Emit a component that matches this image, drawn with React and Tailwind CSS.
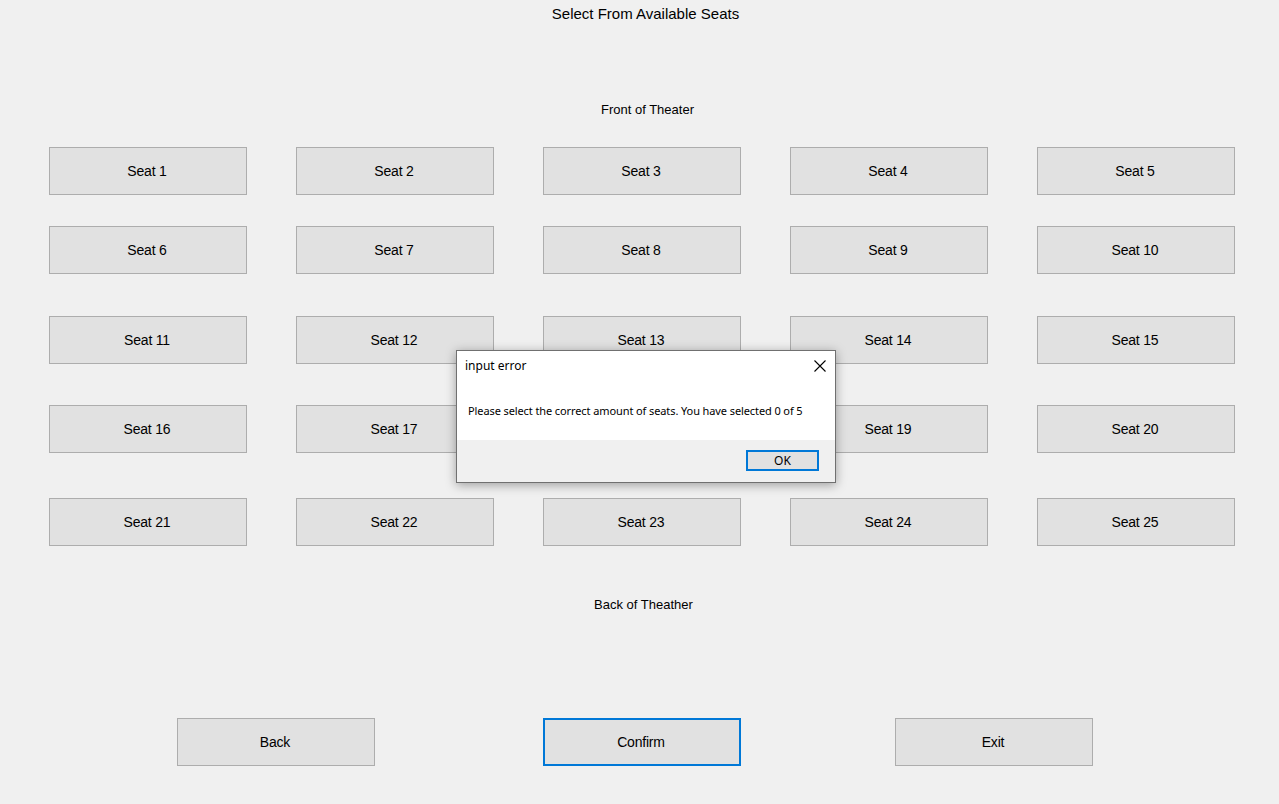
import React from "react";

const rows = [
  { mt: "mt-[0px]", seats: [1, 2, 3, 4, 5] },
  { mt: "mt-[31px]", seats: [6, 7, 8, 9, 10] },
  { mt: "mt-[42px]", seats: [11, 12, 13, 14, 15] },
  { mt: "mt-[41px]", seats: [16, 17, 18, 19, 20] },
  { mt: "mt-[45px]", seats: [21, 22, 23, 24, 25] },
];

function Btn({ children, primary }) {
  return (
    <button
      className={
        primary
          ? "w-[198px] h-[48px] bg-[#e1e1e1] border-2 border-[#0078d7] text-[14px] tracking-[-0.2px] text-black flex items-center justify-center pr-[2px]"
          : "w-[198px] h-[48px] bg-[#e1e1e1] border border-[#adadad] text-[14px] tracking-[-0.2px] text-black flex items-center justify-center pr-[2px]"
      }
    >
      {children}
    </button>
  );
}

export default function App() {
  return (
    <div
      className="relative w-[1279px] h-[804px] bg-[#f0f0f0] overflow-hidden text-black"
      style={{ fontFamily: '"Liberation Sans", Arial, sans-serif' }}
    >
      <div className="pt-[4px] h-[24px] flex justify-center pl-[12px] text-[15px] leading-[20px]">
        Select From Available Seats
      </div>
      <div className="mt-[76px] h-[20px] flex justify-center pl-[16px] text-[13px] leading-[20px]">
        Front of Theater
      </div>
      <div className="mt-[27px] pl-[49px]">
        {rows.map((r, i) => (
          <div key={i} className={"flex gap-[49px] " + r.mt}>
            {r.seats.map((s) => (
              <Btn key={s}>Seat {s}</Btn>
            ))}
          </div>
        ))}
      </div>
      <div className="mt-[49px] h-[20px] flex justify-center pl-[8px] text-[13px] leading-[20px]">
        Back of Theather
      </div>
      <div className="mt-[103px] flex">
        <div className="ml-[177px]">
          <Btn>Back</Btn>
        </div>
        <div className="ml-[168px]">
          <Btn primary>Confirm</Btn>
        </div>
        <div className="ml-[154px]">
          <Btn>Exit</Btn>
        </div>
      </div>

      <div
        className="absolute left-[456px] top-[350px] w-[380px] h-[133px] bg-white border border-[#707070] shadow-[0_2px_10px_rgba(0,0,0,0.35)] flex flex-col"
        style={{ fontFamily: '"Noto Sans", "Open Sans", sans-serif' }}
      >
        <div className="h-[30px] flex items-center justify-between pl-[8px] pr-[6px] text-[12px]">
          <span className="-mt-[1px]">input error</span>
          <svg width="14" height="14" viewBox="0 0 14 14" className="mt-[0px] mr-[2px]">
            <path d="M1.5 1.5 L12.5 12.5 M12.5 1.5 L1.5 12.5" stroke="#000" strokeWidth="1.1" fill="none" />
          </svg>
        </div>
        <div className="h-[59px] pl-[11px] pt-[22px] text-[11px] leading-[16px] tracking-[-0.1px]">
          Please select the correct amount of seats. You have selected 0 of 5
        </div>
        <div className="flex-1 bg-[#f0f0f0] flex justify-end items-start pt-[10px] pr-[16px]">
          <button className="w-[73px] h-[21px] bg-[#e1e1e1] border-2 border-[#0078d7] text-[12px] leading-[16px] flex items-center justify-center">
            OK
          </button>
        </div>
      </div>
    </div>
  );
}
